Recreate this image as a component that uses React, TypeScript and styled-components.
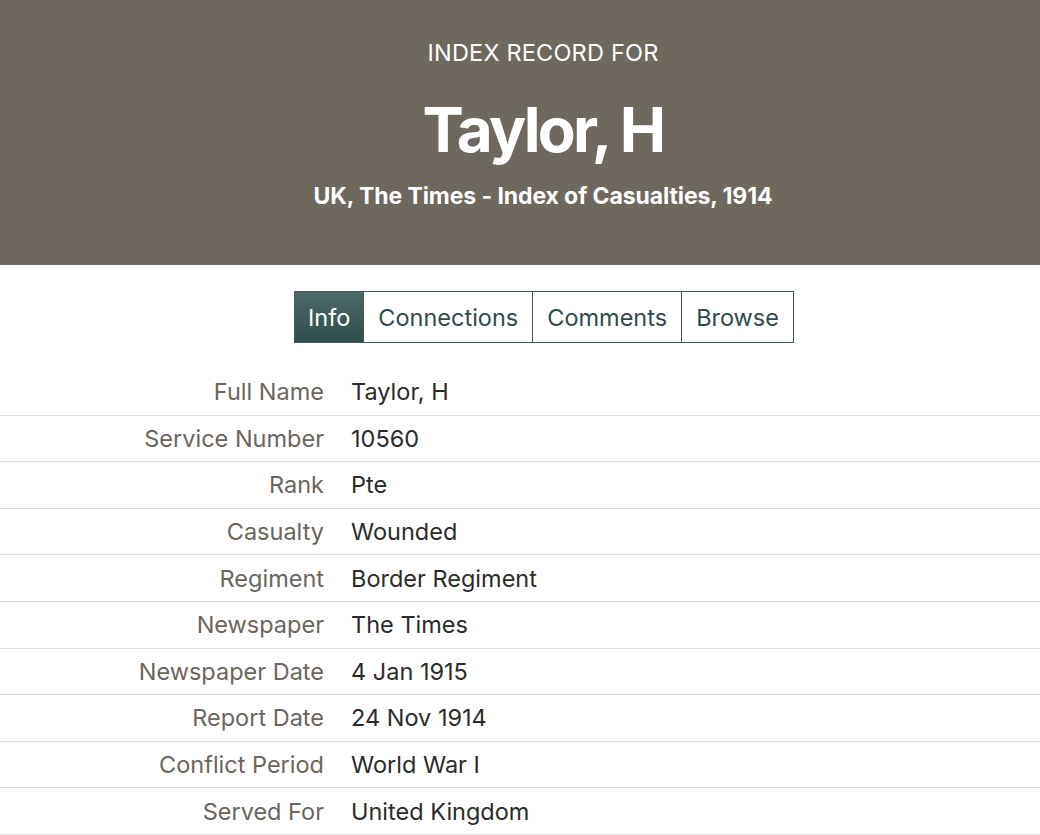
import React, { useState } from 'react';
import styled, { createGlobalStyle } from 'styled-components';

const GlobalStyle = createGlobalStyle`
  body {
    margin: 0;
    font-family: Inter, 'Noto Sans', sans-serif;
    background: #fff;
  }
`;

type Field = { label: string; value: string };

const FIELDS: Field[] = [
  { label: 'Full Name', value: 'Taylor, H' },
  { label: 'Service Number', value: '10560' },
  { label: 'Rank', value: 'Pte' },
  { label: 'Casualty', value: 'Wounded' },
  { label: 'Regiment', value: 'Border Regiment' },
  { label: 'Newspaper', value: 'The Times' },
  { label: 'Newspaper Date', value: '4 Jan 1915' },
  { label: 'Report Date', value: '24 Nov 1914' },
  { label: 'Conflict Period', value: 'World War I' },
  { label: 'Served For', value: 'United Kingdom' },
];

const TABS = ['Info', 'Connections', 'Comments', 'Browse'];

const App = () => {
  const [tab, setTab] = useState('Info');

  return (
    <>
      <GlobalStyle />
      <Header>
        <Kicker>INDEX RECORD FOR</Kicker>
        <Title>Taylor, H</Title>
        <Collection>UK, The Times - Index of Casualties, 1914</Collection>
      </Header>
      <TabBar>
        {TABS.map((t) => (
          <Tab key={t} $active={t === tab} onClick={() => setTab(t)}>
            {t}
          </Tab>
        ))}
      </TabBar>
      <Table>
        {FIELDS.map((f) => (
          <Row key={f.label}>
            <Label>{f.label}</Label>
            <Value>{f.value}</Value>
          </Row>
        ))}
      </Table>
    </>
  );
};

export default App;

// content is centred a little right of the window middle
const Header = styled.header`
  background-color: #6e685e;
  color: #fff;
  height: 265px;
  box-sizing: border-box;
  padding: 38px 0 0 46px;
  text-align: center;
`;

const Kicker = styled.div`
  font-size: 23.5px;
  line-height: 30px;
  letter-spacing: 0.2px;
`;

const Title = styled.h1`
  margin: 29px 0 0;
  font-size: 62px;
  line-height: 66px;
  font-weight: 700;
  letter-spacing: -2.7px;
`;

const Collection = styled.div`
  margin-top: 18px;
  font-size: 23px;
  line-height: 30px;
  font-weight: 700;
  letter-spacing: -0.1px;
`;

const TabBar = styled.nav`
  display: flex;
  justify-content: center;
  margin: 26px 0 26px;
  padding-left: 48px;
`;

const Tab = styled.button<{ $active: boolean }>`
  height: 52px;
  padding: 0 14px;
  font-family: inherit;
  font-size: 23.5px;
  border: 1px solid #3f5c5b;
  margin-left: -1px;
  cursor: pointer;
  color: ${(p) => (p.$active ? '#fff' : '#2f4b4b')};
  background: ${(p) =>
    p.$active ? 'linear-gradient(#4c6a69, #2f4c4c)' : '#fff'};
  &:first-child {
    margin-left: 0;
    padding: 0 13px;
  }
`;

const Table = styled.div`
  display: flex;
  flex-direction: column;
`;

const Row = styled.div`
  display: grid;
  grid-template-columns: 324px 1fr;
  column-gap: 27px;
  align-items: center;
  height: 46.6px;
  box-sizing: border-box;
  border-bottom: 1px solid #dedede;
  font-size: 23.5px;
`;

const Label = styled.div`
  text-align: right;
  color: #6b655c;
`;

const Value = styled.div`
  color: #2b2b2b;
`;
